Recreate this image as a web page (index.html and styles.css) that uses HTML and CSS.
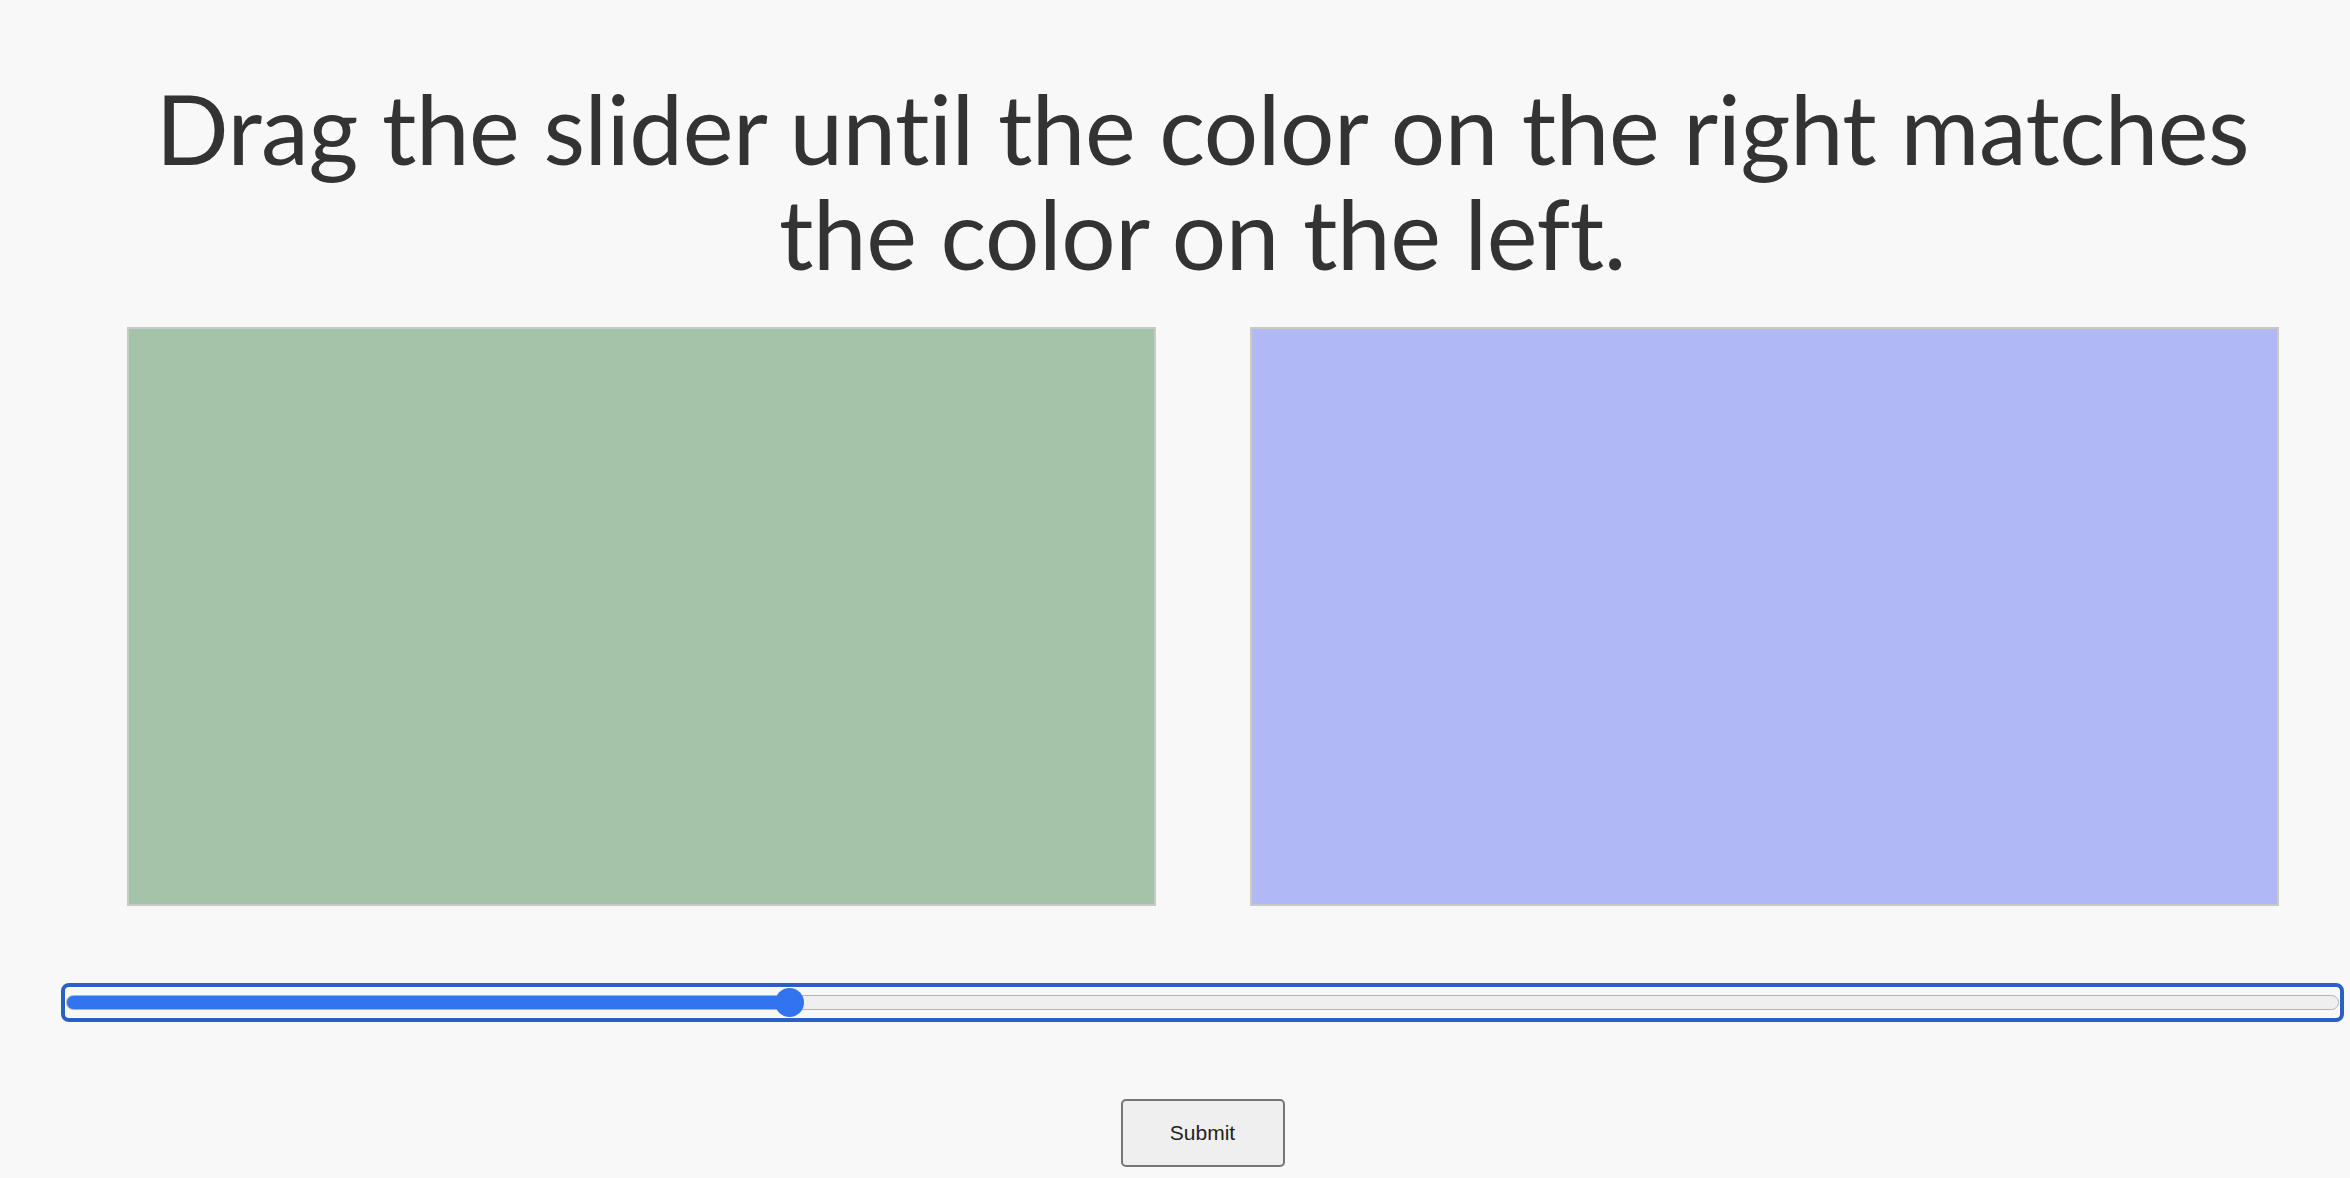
FILE: index.html
```html
<!DOCTYPE html>
<html lang="en">
<head>
<meta charset="utf-8">
<title>Color match</title>
<link rel="stylesheet" href="styles.css">
</head>
<body>
<main class="page">
  <h1 class="title">Drag the slider until the color on the right matches<br>the color on the left.</h1>
  <div class="swatches">
    <div class="swatch swatch-target"></div>
    <div class="swatch swatch-guess"></div>
  </div>
  <div class="slider-row">
    <input class="slider" type="range" min="0" max="100" step="any" value="31.6" style="--pct: 31.8%">
  </div>
  <div class="actions">
    <button class="submit" type="button">Submit</button>
  </div>
</main>
</body>
</html>
```

FILE: styles.css
```css
html, body {
  margin: 0;
  padding: 0;
  background: #f8f8f8;
}

.page {
  padding: 0 6px 0 61px;
  display: flex;
  flex-direction: column;
}

.title {
  margin: 75px 0 0 0;
  font-family: Lato, "Open Sans", sans-serif;
  font-weight: 400;
  font-size: 96px;
  line-height: 105px;
  letter-spacing: -0.45px;
  font-variant-ligatures: none;
  font-feature-settings: "liga" 0, "clig" 0, "dlig" 0;
  color: #333333;
  text-align: center;
}

.swatches {
  margin-top: 42px;
  padding: 0 65px 0 66px;
  display: flex;
  gap: 94px;
}

.swatch {
  flex: 1;
  height: 579px;
  box-sizing: border-box;
  border: 2px solid #c9c9c9;
}

.swatch-target {
  background: #a3c4a9;
}

.swatch-guess {
  background: #b0b8f5;
}

.slider-row {
  margin-top: 82px;
  padding: 0 5px;
  display: flex;
}

.slider {
  -webkit-appearance: none;
  appearance: none;
  flex: 1;
  margin: 0;
  height: 29px;
  background: transparent;
  border-radius: 3px;
  outline: 4px solid #2a5fc6;
  outline-offset: 1px;
  box-shadow: 0 0 0 1px #ffffff;
}

.slider::-webkit-slider-runnable-track {
  height: 15px;
  box-sizing: border-box;
  border: 1px solid #b3b3b3;
  border-radius: 8px;
  background: linear-gradient(to right, #3274f0 0, #3274f0 var(--pct), #efefef var(--pct), #efefef 100%);
}

.slider::-webkit-slider-thumb {
  -webkit-appearance: none;
  appearance: none;
  width: 29px;
  height: 29px;
  margin-top: -8px;
  border: none;
  border-radius: 50%;
  background: #3274f0;
}

.actions {
  margin-top: 82px;
  display: flex;
  justify-content: center;
}

.submit {
  width: 164px;
  height: 68px;
  box-sizing: border-box;
  border: 2px solid #767676;
  border-radius: 5px;
  background: #efefef;
  font-family: "Liberation Sans", Arial, sans-serif;
  font-size: 21px;
  color: #222222;
  padding: 0;
}
```
